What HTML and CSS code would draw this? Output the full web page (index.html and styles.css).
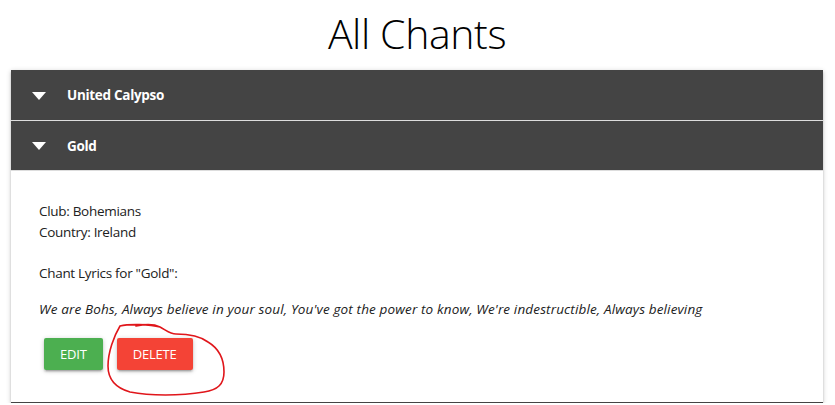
FILE: index.html
```html
<!DOCTYPE html>
<html>
<head>
<meta charset="utf-8">
<link rel="stylesheet" href="styles.css">
</head>
<body>
<h1 class="title">All Chants</h1>
<ul class="collapsible">
  <li class="item">
    <div class="header"><span class="caret"></span><span class="name">United Calypso</span></div>
  </li>
  <li class="item">
    <div class="header"><span class="caret"></span><span class="name">Gold</span></div>
    <div class="body">
      <p class="meta">Club: Bohemians<br>Country: Ireland</p>
      <p class="label">Chant Lyrics for "Gold":</p>
      <p class="lyrics">We are Bohs, Always believe in your soul, You've got the power to know, We're indestructible, Always believing</p>
      <div class="actions">
        <button class="btn btn-edit">EDIT</button>
        <button class="btn btn-delete">DELETE</button>
        <svg class="scribble" width="124" height="76" viewBox="0 0 124 76"><path d="M54 5 C44 2 22 2 14 4 C8 14 2 30 2 44 C2 58 10 66 24 70 C44 74 74 74 98 70 C112 68 118 62 118 50 C118 36 112 26 102 20 C94 14 80 12 70 12 C64 12 60 8 54 5 C48 2 40 2 30 4" fill="none" stroke="#e0161b" stroke-width="1.6" stroke-linecap="round"/></svg>
      </div>
    </div>
  </li>
</ul>
</body>
</html>
```
FILE: styles.css
```css
html { font-size: 14px; }
body {
  margin: 0;
  padding: 0 12px 0 11px;
  font-family: "Open Sans", "Noto Sans", sans-serif;
  color: #212121;
  background: #fff;
}
.title {
  margin: 0;
  padding-top: 9px;
  height: 61px;
  text-align: center;
  font-weight: 300;
  font-size: 41px;
  line-height: 48px;
  color: #000;
  letter-spacing: -0.4px;
}
.collapsible {
  list-style: none;
  margin: 0;
  padding: 0;
  box-shadow: 0 2px 2px 0 rgba(0,0,0,0.14), 0 3px 1px -2px rgba(0,0,0,0.12), 0 1px 5px 0 rgba(0,0,0,0.2);
  border-bottom: 1px solid #444;
}
.header {
  display: flex;
  align-items: center;
  height: 50px;
  background: #444444;
  border-bottom: 1px solid #ddd;
  color: #fff;
  padding-left: 21px;
  box-sizing: border-box;
}
.item:first-child .header { height: 51px; }
.caret {
  width: 0; height: 0;
  border-left: 7px solid transparent;
  border-right: 7px solid transparent;
  border-top: 8px solid #fff;
  margin-right: 21px;
  margin-top: 1px;
}
.name {
  font-weight: 700;
  font-size: 13.5px;
  letter-spacing: -0.3px;
}
.body {
  padding: 30px 28px 32px 28px;
  position: relative;
}
.body p { margin: 0; font-size: 13.5px; line-height: 21px; letter-spacing: -0.3px; }
.meta { margin-bottom: 20px !important; }
.label { margin-bottom: 15px !important; }
.lyrics { font-style: italic; margin-bottom: 18px !important; letter-spacing: 0.14px !important; }
.actions {
  display: flex;
  gap: 14px;
  padding-left: 5px;
  position: relative;
}
.btn {
  border: none;
  border-radius: 2px;
  height: 32px;
  padding: 0 16px;
  color: #fff;
  font-family: inherit;
  font-size: 13px;
  letter-spacing: -0.2px;
  box-shadow: 0 2px 2px 0 rgba(0,0,0,0.14), 0 3px 1px -2px rgba(0,0,0,0.12), 0 1px 5px 0 rgba(0,0,0,0.2);
}
.btn-edit { background: #4caf50; }
.btn-delete { background: #f44336; }
.scribble {
  position: absolute;
  left: 67px;
  top: -16px;
}
```
